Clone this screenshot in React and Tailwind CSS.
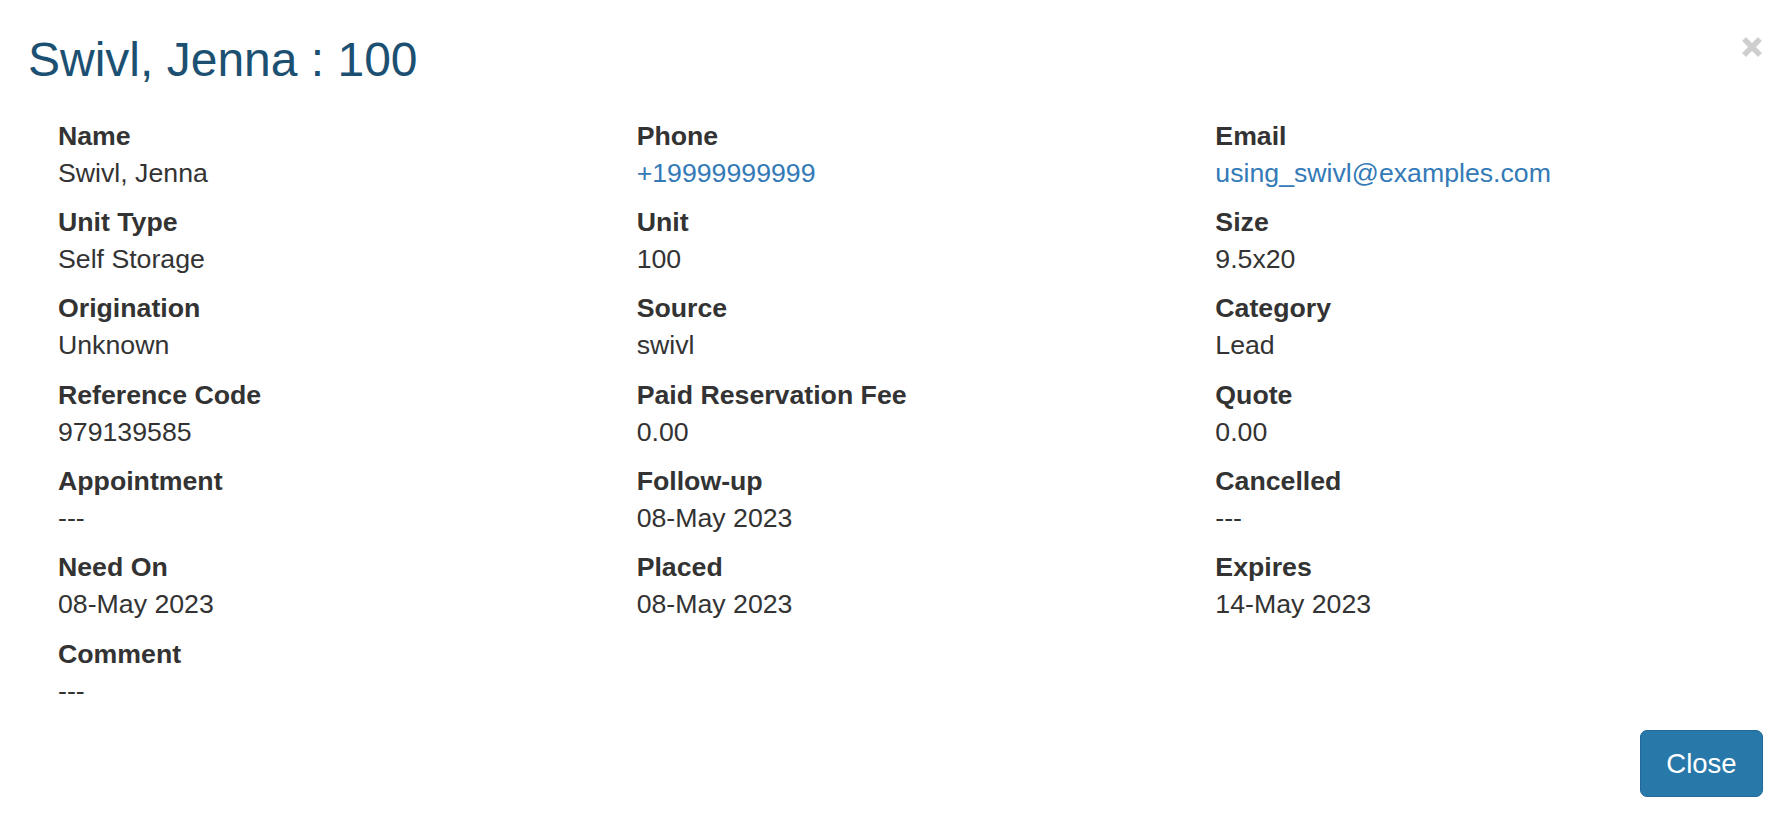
// Lead detail modal: title, 3-column field grid, close button
const FIELDS = [
  ["Name", "Swivl, Jenna"],
  ["Phone", "+19999999999", true],
  ["Email", "using_swivl@examples.com", true],
  ["Unit Type", "Self Storage"],
  ["Unit", "100"],
  ["Size", "9.5x20"],
  ["Origination", "Unknown"],
  ["Source", "swivl"],
  ["Category", "Lead"],
  ["Reference Code", "979139585"],
  ["Paid Reservation Fee", "0.00"],
  ["Quote", "0.00"],
  ["Appointment", "---"],
  ["Follow-up", "08-May 2023"],
  ["Cancelled", "---"],
  ["Need On", "08-May 2023"],
  ["Placed", "08-May 2023"],
  ["Expires", "14-May 2023"],
  ["Comment", "---"],
]

function CloseX() {
  return (
    <svg width="22" height="22" viewBox="0 0 22 22" className="mt-[2px] shrink-0">
      <path d="M3 3 L19 19 M19 3 L3 19" stroke="#cfcfcf" strokeWidth="5.5" strokeLinecap="butt" />
    </svg>
  )
}

export default function App() {
  return (
    <div className="flex h-[820px] w-full flex-col bg-white font-['Liberation_Sans',Arial,sans-serif] text-[#333333]">
      {/* header */}
      <div className="flex items-start justify-between pl-[28px] pr-[25px] pt-[34px]">
        <h4 className="text-[48px] leading-[1.1] font-normal text-[#1c5072]">Swivl, Jenna : 100</h4>
        <CloseX />
      </div>

      {/* body */}
      <div className="grid grid-cols-3 pl-[32px] pr-[20px] pt-[31px]">
        {FIELDS.map(([label, value, link], i) => (
          <div key={i} className="mb-[12.3px] px-[26px] text-[26.7px] leading-[37px]">
            <div className="font-bold">{label}</div>
            <div className={link ? "text-[#337ab7]" : ""}>{value}</div>
          </div>
        ))}
      </div>

      {/* footer */}
      <div className="mt-auto flex justify-end pb-[23px] pr-[25px]">
        <button className="flex h-[67px] w-[123px] items-center justify-center rounded-[7px] border border-[#22689a] bg-[#2878a9] text-[27.5px] text-white">
          Close
        </button>
      </div>
    </div>
  )
}
